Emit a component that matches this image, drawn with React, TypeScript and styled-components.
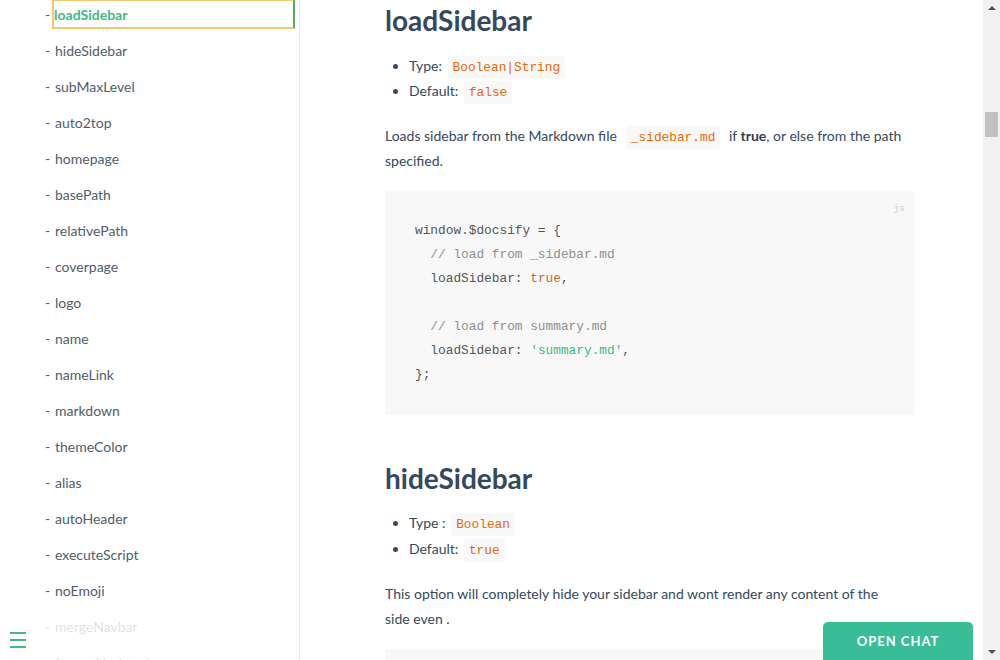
import React from "react";
import styled, { createGlobalStyle } from "styled-components";

const GlobalStyle = createGlobalStyle`
  html, body { margin: 0; padding: 0; background: #fff; overflow: hidden; }
  body { font-family: Lato, "Open Sans", sans-serif; -webkit-font-smoothing: antialiased; }
  * { box-sizing: border-box; }
`;

const Page = styled.div`
  display: flex;
  width: 1000px;
  height: 660px;
  overflow: hidden;
  position: relative;
`;

const Sidebar = styled.aside`
  position: relative;
  width: 300px;
  flex: 0 0 300px;
  border-right: 1px solid #eaeaea;
  overflow: hidden;
  padding: 0 4px 0 45px;
`;

const NavList = styled.ul`
  list-style: none;
  margin: -1px 0 0;
  padding: 0;
  display: flex;
  flex-direction: column;
  gap: 6px;
`;

const NavItem = styled.li`
  display: flex;
  align-items: center;
  height: 30px;
  font-size: 14px;
  color: #505d6b;
`;

const Dash = styled.span`
  width: 8px;
  flex: 0 0 8px;
`;

const NavLink = styled.a<{ $active?: boolean }>`
  flex: 1;
  height: 30px;
  display: flex;
  align-items: center;
  padding-left: ${(p) => (p.$active ? "0px" : "1px")};
  margin-left: -1px;
  color: ${(p) => (p.$active ? "#42b983" : "#505d6b")};
  font-weight: ${(p) => (p.$active ? 700 : 400)};
  border: ${(p) => (p.$active ? "2px solid #f3c86f" : "2px solid transparent")};
  border-right: ${(p) => (p.$active ? "2px solid #5aa85a" : "2px solid transparent")};
  text-decoration: none;
`;

const ToggleBar = styled.div`
  position: absolute;
  left: 0;
  bottom: 0;
  width: 284px;
  height: 42px;
  background: rgba(255, 255, 255, 0.82);
  padding: 14px 10px 0 10px;
  display: flex;
  flex-direction: column;
  gap: 5px;
`;

const ToggleLine = styled.span`
  display: block;
  width: 16px;
  height: 2px;
  background: #42b983;
`;

const Main = styled.main`
  flex: 1;
  position: relative;
  overflow: hidden;
`;

const Section = styled.section`
  width: 615px;
  padding-left: 85px;
  color: #34495e;
  font-size: 14px;
`;

const H2 = styled.h2`
  margin: 0 0 12.5px;
  font-size: 28px;
  line-height: 40px;
  font-weight: 700;
  color: #34495e;
`;

const List = styled.ul`
  margin: 0 0 19px;
  padding-left: 24px;
  line-height: 25.6px;
  li::marker { color: #34495e; }
`;

const Para = styled.p`
  margin: 0 0 17px;
  line-height: 25.6px;
  white-space: nowrap;
`;

const Code = styled.code<{ $wide?: boolean }>`
  font-family: "Liberation Mono", "DejaVu Sans Mono", monospace;
  font-size: 12.8px;
  line-height: 1;
  color: #e96900;
  background: #f8f8f8;
  border-radius: 2px;
  padding: 4px 5px;
  margin: ${(p) => (p.$wide ? "0 5px 0 9px" : "0 2px")};
`;

const Strong = styled.strong`
  font-weight: 700;
  color: #2c3e50;
`;

const Pre = styled.pre<{ $gap?: number }>`
  position: relative;
  margin: 0 0 ${(p) => p.$gap ?? 43}px;
  background: #f8f8f8;
  padding: 28px 30px;
  font-family: "Liberation Mono", "DejaVu Sans Mono", monospace;
  font-size: 12.8px;
  line-height: 24px;
  color: #555;
  min-height: 40px;
`;

const Lang = styled.span`
  position: absolute;
  top: 6px;
  right: 10px;
  font-size: 9.6px;
  color: #ccc;
  font-family: "Liberation Mono", monospace;
`;

const Comment = styled.span`
  color: #8e908c;
`;
const Bool = styled.span`
  color: #c76b29;
`;
const Str = styled.span`
  color: #42b983;
`;

const ScrollTrack = styled.div`
  width: 17px;
  flex: 0 0 17px;
  background: #f1f1f1;
  position: relative;
  display: flex;
  flex-direction: column;
  align-items: center;
`;

const Arrow = styled.div<{ $down?: boolean }>`
  width: 0;
  height: 0;
  border-left: 4px solid transparent;
  border-right: 4px solid transparent;
  ${(p) =>
    p.$down
      ? "border-top: 4px solid #505050; margin-top: auto; margin-bottom: 6px;"
      : "border-bottom: 4px solid #505050; margin-top: 6px;"}
`;

const Thumb = styled.div`
  position: absolute;
  left: 2px;
  top: 112px;
  width: 13px;
  height: 25px;
  background: #c1c1c1;
`;

const ChatButton = styled.button`
  position: absolute;
  right: 10px;
  bottom: -6px;
  width: 150px;
  height: 44px;
  border: none;
  border-radius: 5px 5px 0 0;
  background: #39bd97;
  color: #fff;
  font-family: Lato, "Open Sans", sans-serif;
  font-weight: 700;
  font-size: 13px;
  letter-spacing: 1px;
  padding: 0 0 6px;
`;

const navItems = [
  "loadSidebar",
  "hideSidebar",
  "subMaxLevel",
  "auto2top",
  "homepage",
  "basePath",
  "relativePath",
  "coverpage",
  "logo",
  "name",
  "nameLink",
  "markdown",
  "themeColor",
  "alias",
  "autoHeader",
  "executeScript",
  "noEmoji",
  "mergeNavbar",
  "formatUpdated",
];

export default function App() {
  return (
    <>
      <GlobalStyle />
      <Page>
        <Sidebar>
          <NavList>
            {navItems.map((n, i) => (
              <NavItem key={n}>
                <Dash>-</Dash>
                <NavLink $active={i === 0}>{n}</NavLink>
              </NavItem>
            ))}
          </NavList>
          <ToggleBar>
            <ToggleLine />
            <ToggleLine />
            <ToggleLine />
          </ToggleBar>
        </Sidebar>
        <Main>
          <Section>
            <H2>loadSidebar</H2>
            <List>
              <li>
                Type: <Code>Boolean|String</Code>
              </li>
              <li>
                Default: <Code>false</Code>
              </li>
            </List>
            <Para>
              Loads sidebar from the Markdown file<Code $wide>_sidebar.md</Code> if <Strong>true</Strong>, or else from the path
              <br />
              specified.
            </Para>
            <Pre>
              <Lang>js</Lang>
              {"window.$docsify = {\n  "}
              <Comment>// load from _sidebar.md</Comment>
              {"\n  loadSidebar: "}
              <Bool>true</Bool>
              {",\n\n  "}
              <Comment>// load from summary.md</Comment>
              {"\n  loadSidebar: "}
              <Str>'summary.md'</Str>
              {",\n};"}
            </Pre>
            <H2>hideSidebar</H2>
            <List>
              <li>
                Type : <Code>Boolean</Code>
              </li>
              <li>
                Default: <Code>true</Code>
              </li>
            </List>
            <Para>
              This option will completely hide your sidebar and wont render any content of the
              <br />
              side even .
            </Para>
            <Pre $gap={0}>
              <Lang>js</Lang>
              {"window.$docsify = {"}
            </Pre>
          </Section>
          <ChatButton>OPEN CHAT</ChatButton>
        </Main>
        <ScrollTrack>
          <Arrow />
          <Thumb />
          <Arrow $down />
        </ScrollTrack>
      </Page>
    </>
  );
}
